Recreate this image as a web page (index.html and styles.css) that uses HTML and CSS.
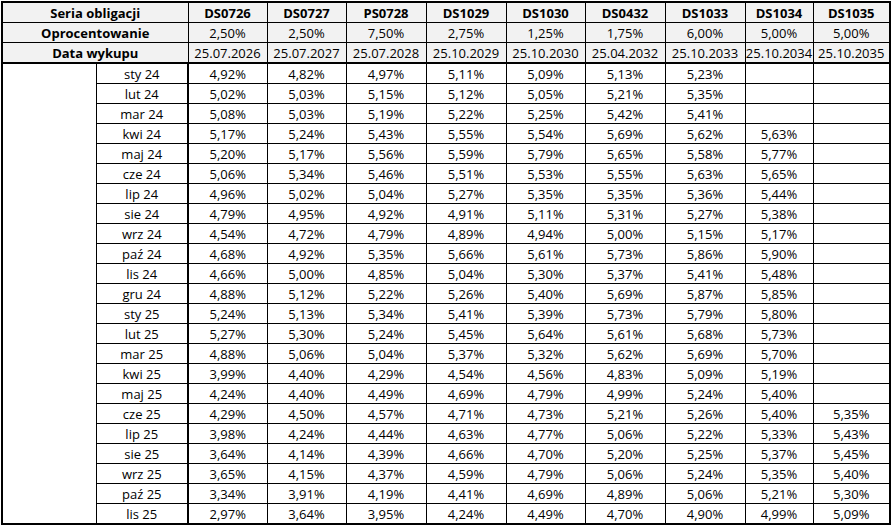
FILE: index.html
```html
<!DOCTYPE html>
<html lang="pl">
<head>
<meta charset="utf-8">
<title>Seria obligacji</title>
<link rel="stylesheet" href="styles.css">
</head>
<body>
<div class="wrap">
<table class="bonds">
<colgroup>
<col class="c-blank"><col class="c-month">
<col class="c-79"><col class="c-79"><col class="c-80"><col class="c-80"><col class="c-79"><col class="c-80"><col class="c-80"><col class="c-68"><col class="c-77">
</colgroup>
<thead>
<tr class="h h1">
<th colspan="2">Seria obligacji</th><th class="first">DS0726</th><th>DS0727</th><th>PS0728</th><th>DS1029</th><th>DS1030</th><th>DS0432</th><th>DS1033</th><th>DS1034</th><th>DS1035</th>
</tr>
<tr class="h h2">
<th colspan="2">Oprocentowanie</th><td class="first">2,50%</td><td>2,50%</td><td>7,50%</td><td>2,75%</td><td>1,25%</td><td>1,75%</td><td>6,00%</td><td>5,00%</td><td>5,00%</td>
</tr>
<tr class="h h3">
<th colspan="2">Data wykupu</th><td class="first">25.07.2026</td><td>25.07.2027</td><td>25.07.2028</td><td>25.10.2029</td><td>25.10.2030</td><td>25.04.2032</td><td>25.10.2033</td><td>25.10.2034</td><td>25.10.2035</td>
</tr>
</thead>
<tbody>
<tr><td class="blank" rowspan="23"></td><td class="m">sty 24</td><td class="first">4,92%</td><td>4,82%</td><td>4,97%</td><td>5,11%</td><td>5,09%</td><td>5,13%</td><td>5,23%</td><td></td><td></td></tr>
<tr><td class="m">lut 24</td><td class="first">5,02%</td><td>5,03%</td><td>5,15%</td><td>5,12%</td><td>5,05%</td><td>5,21%</td><td>5,35%</td><td></td><td></td></tr>
<tr><td class="m">mar 24</td><td class="first">5,08%</td><td>5,03%</td><td>5,19%</td><td>5,22%</td><td>5,25%</td><td>5,42%</td><td>5,41%</td><td></td><td></td></tr>
<tr><td class="m">kwi 24</td><td class="first">5,17%</td><td>5,24%</td><td>5,43%</td><td>5,55%</td><td>5,54%</td><td>5,69%</td><td>5,62%</td><td>5,63%</td><td></td></tr>
<tr><td class="m">maj 24</td><td class="first">5,20%</td><td>5,17%</td><td>5,56%</td><td>5,59%</td><td>5,79%</td><td>5,65%</td><td>5,58%</td><td>5,77%</td><td></td></tr>
<tr><td class="m">cze 24</td><td class="first">5,06%</td><td>5,34%</td><td>5,46%</td><td>5,51%</td><td>5,53%</td><td>5,55%</td><td>5,63%</td><td>5,65%</td><td></td></tr>
<tr><td class="m">lip 24</td><td class="first">4,96%</td><td>5,02%</td><td>5,04%</td><td>5,27%</td><td>5,35%</td><td>5,35%</td><td>5,36%</td><td>5,44%</td><td></td></tr>
<tr><td class="m">sie 24</td><td class="first">4,79%</td><td>4,95%</td><td>4,92%</td><td>4,91%</td><td>5,11%</td><td>5,31%</td><td>5,27%</td><td>5,38%</td><td></td></tr>
<tr><td class="m">wrz 24</td><td class="first">4,54%</td><td>4,72%</td><td>4,79%</td><td>4,89%</td><td>4,94%</td><td>5,00%</td><td>5,15%</td><td>5,17%</td><td></td></tr>
<tr><td class="m">paź 24</td><td class="first">4,68%</td><td>4,92%</td><td>5,35%</td><td>5,66%</td><td>5,61%</td><td>5,73%</td><td>5,86%</td><td>5,90%</td><td></td></tr>
<tr><td class="m">lis 24</td><td class="first">4,66%</td><td>5,00%</td><td>4,85%</td><td>5,04%</td><td>5,30%</td><td>5,37%</td><td>5,41%</td><td>5,48%</td><td></td></tr>
<tr><td class="m">gru 24</td><td class="first">4,88%</td><td>5,12%</td><td>5,22%</td><td>5,26%</td><td>5,40%</td><td>5,69%</td><td>5,87%</td><td>5,85%</td><td></td></tr>
<tr><td class="m">sty 25</td><td class="first">5,24%</td><td>5,13%</td><td>5,34%</td><td>5,41%</td><td>5,39%</td><td>5,73%</td><td>5,79%</td><td>5,80%</td><td></td></tr>
<tr><td class="m">lut 25</td><td class="first">5,27%</td><td>5,30%</td><td>5,24%</td><td>5,45%</td><td>5,64%</td><td>5,61%</td><td>5,68%</td><td>5,73%</td><td></td></tr>
<tr><td class="m">mar 25</td><td class="first">4,88%</td><td>5,06%</td><td>5,04%</td><td>5,37%</td><td>5,32%</td><td>5,62%</td><td>5,69%</td><td>5,70%</td><td></td></tr>
<tr><td class="m">kwi 25</td><td class="first">3,99%</td><td>4,40%</td><td>4,29%</td><td>4,54%</td><td>4,56%</td><td>4,83%</td><td>5,09%</td><td>5,19%</td><td></td></tr>
<tr><td class="m">maj 25</td><td class="first">4,24%</td><td>4,40%</td><td>4,49%</td><td>4,69%</td><td>4,79%</td><td>4,99%</td><td>5,24%</td><td>5,40%</td><td></td></tr>
<tr><td class="m">cze 25</td><td class="first">4,29%</td><td>4,50%</td><td>4,57%</td><td>4,71%</td><td>4,73%</td><td>5,21%</td><td>5,26%</td><td>5,40%</td><td>5,35%</td></tr>
<tr><td class="m">lip 25</td><td class="first">3,98%</td><td>4,24%</td><td>4,44%</td><td>4,63%</td><td>4,77%</td><td>5,06%</td><td>5,22%</td><td>5,33%</td><td>5,43%</td></tr>
<tr><td class="m">sie 25</td><td class="first">3,64%</td><td>4,14%</td><td>4,39%</td><td>4,66%</td><td>4,70%</td><td>5,20%</td><td>5,25%</td><td>5,37%</td><td>5,45%</td></tr>
<tr><td class="m">wrz 25</td><td class="first">3,65%</td><td>4,15%</td><td>4,37%</td><td>4,59%</td><td>4,79%</td><td>5,06%</td><td>5,24%</td><td>5,35%</td><td>5,40%</td></tr>
<tr><td class="m">paź 25</td><td class="first">3,34%</td><td>3,91%</td><td>4,19%</td><td>4,41%</td><td>4,69%</td><td>4,89%</td><td>5,06%</td><td>5,21%</td><td>5,30%</td></tr>
<tr><td class="m">lis 25</td><td class="first">2,97%</td><td>3,64%</td><td>3,95%</td><td>4,24%</td><td>4,49%</td><td>4,70%</td><td>4,90%</td><td>4,99%</td><td>5,09%</td></tr>
</tbody>
</table>
</div>
</body>
</html>
```
FILE: styles.css
```css
html, body {
  margin: 0;
  padding: 0;
  background: #ffffff;
}

.wrap {
  padding: 1px 0 0 1px;
}

.bonds {
  border-collapse: collapse;
  table-layout: fixed;
  width: 888px;
  font-family: "Open Sans", "Noto Sans", sans-serif;
  font-size: 13px;
  color: #000;
  border: 2px solid #000;
}

.c-blank { width: 94px; }
.c-month { width: 92px; }
.c-79 { width: 79px; }
.c-80 { width: 80px; }
.c-68 { width: 68px; }
.c-77 { width: 77px; }

.bonds th,
.bonds td {
  border: 1px solid #000;
  padding: 0;
  text-align: center;
  vertical-align: middle;
  white-space: nowrap;
  overflow: hidden;
  line-height: 16px;
  height: 19px;
}

.bonds th {
  font-weight: 700;
}

.h th,
.h td {
  background: #f2f2f2;
}

.h3 th,
.h3 td {
  border-bottom: 2px solid #000;
}

.bonds tbody td.first {
  border-left: 2px solid #000;
}

.bonds td.blank {
  background: #fff;
}
```
